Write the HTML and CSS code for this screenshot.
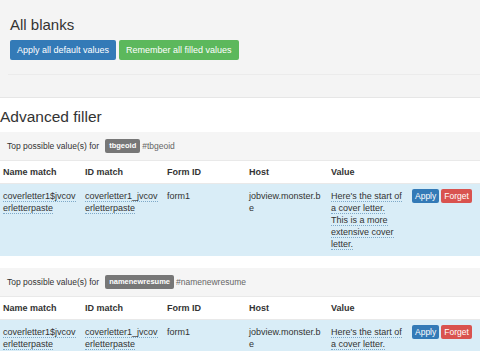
FILE: index.html
```html
<html>

<head>
  <title>Form filler</title>
  <link rel="stylesheet" href="styles.css">
</head>

<body>
  <div class="blanks">
    <h3 class="title">All blanks</h3>
    <div class="actions">
      <button class="btn btn-blue">Apply all default values</button>
      <button class="btn btn-green">Remember all filled values</button>
    </div>
    <div class="rule"></div>
  </div>

  <h2 class="filler-title">Advanced filler</h2>

  <div class="panel">
    <div class="panel-head">Top possible value(s) for <span class="label">tbgeoid</span><span class="field-id">#tbgeoid</span></div>
    <table class="matches">
      <tr>
        <th>Name match</th>
        <th>ID match</th>
        <th>Form ID</th>
        <th>Host</th>
        <th>Value</th>
        <th></th>
      </tr>
      <tr class="info">
        <td class="wrap"><span class="dotted">coverletter1$jvcoverletterpaste</span></td>
        <td class="wrap"><span class="dotted">coverletter1_jvcoverletterpaste</span></td>
        <td>form1</td>
        <td class="wrap">jobview.monster.be</td>
        <td class="value"><span class="dotted">Here's the start of a cover letter. This is a more extensive cover letter.</span></td>
        <td class="tools"><button class="btn-sm btn-blue">Apply</button><button class="btn-sm btn-red">Forget</button></td>
      </tr>
    </table>
  </div>

  <div class="panel">
    <div class="panel-head">Top possible value(s) for <span class="label">namenewresume</span><span class="field-id">#namenewresume</span></div>
    <table class="matches">
      <tr>
        <th>Name match</th>
        <th>ID match</th>
        <th>Form ID</th>
        <th>Host</th>
        <th>Value</th>
        <th></th>
      </tr>
      <tr class="info">
        <td class="wrap"><span class="dotted">coverletter1$jvcoverletterpaste</span></td>
        <td class="wrap"><span class="dotted">coverletter1_jvcoverletterpaste</span></td>
        <td>form1</td>
        <td class="wrap">jobview.monster.be</td>
        <td class="value"><span class="dotted">Here's the start of a cover letter. This is a more extensive cover letter.</span></td>
        <td class="tools"><button class="btn-sm btn-blue">Apply</button><button class="btn-sm btn-red">Forget</button></td>
      </tr>
    </table>
  </div>
</body>

</html>
```

FILE: styles.css
```css
* {
  font-family: 'Liberation Sans', Arial, sans-serif;
  box-sizing: border-box;
}

html, body {
  overflow: hidden;
}

body {
  margin: 0;
  background: white;
  color: #333;
}

.blanks {
  background-color: #f4f4f4;
  border-bottom: 1px solid #e6e6e6;
  padding: 16px 0 23px 10px;
  height: 98px;
}

.title {
  margin: 0;
  font-size: 15px;
  font-weight: 400;
  line-height: 18px;
}

.actions {
  display: flex;
  gap: 3px;
  margin-top: 6px;
}

.btn {
  border: none;
  border-radius: 2px;
  color: white;
  font-size: 9px;
  line-height: 12px;
  height: 20px;
  padding: 4px 7px;
}

.btn-blue {
  background-color: #337ab7;
}

.btn-green {
  background-color: #5cb85c;
}

.btn-red {
  background-color: #d9534f;
}

.rule {
  margin-top: 14px;
  margin-left: -2px;
  border-top: 1px solid #ebebeb;
}

.filler-title {
  margin: 10px 0 6px 0;
  font-size: 15.5px;
  font-weight: 400;
  line-height: 18px;
}

.panel {
  overflow: hidden;
  margin-bottom: 12px;
}

.panel-head {
  display: flex;
  align-items: center;
  height: 28px;
  padding: 0 7px;
  background-color: #f5f5f5;
  font-size: 8.5px;
}

.label {
  background-color: #777;
  color: white;
  font-weight: bold;
  font-size: 7.5px;
  line-height: 8px;
  padding: 3px 4px;
  border-radius: 2px;
  margin-left: 6px;
}

.field-id {
  color: #666;
  margin-left: 2px;
}

.matches {
  width: 492px;
  table-layout: fixed;
  border-collapse: collapse;
  font-size: 9px;
}

.matches th, .matches td {
  width: 82px;
  text-align: left;
  vertical-align: top;
  border-top: 1px solid #e9e9e9;
  padding: 6px 5px 6px 3px;
  line-height: 12px;
}

.matches th {
  height: 23px;
  padding-top: 5px;
  padding-bottom: 5px;
}

.info td {
  background-color: #d9edf7;
  height: 72px;
}

.wrap {
  word-break: break-all;
}

.matches .value {
  padding-right: 7px;
}

.dotted {
  border-bottom: 1px dotted #7ea9c8;
}

.matches .tools {
  padding-top: 5px;
  padding-left: 2px;
}

.btn-sm {
  border: none;
  border-radius: 2px;
  color: white;
  font-size: 8.5px;
  line-height: 12px;
  height: 14px;
  padding: 1px 3px;
  margin-right: 2px;
}
```
